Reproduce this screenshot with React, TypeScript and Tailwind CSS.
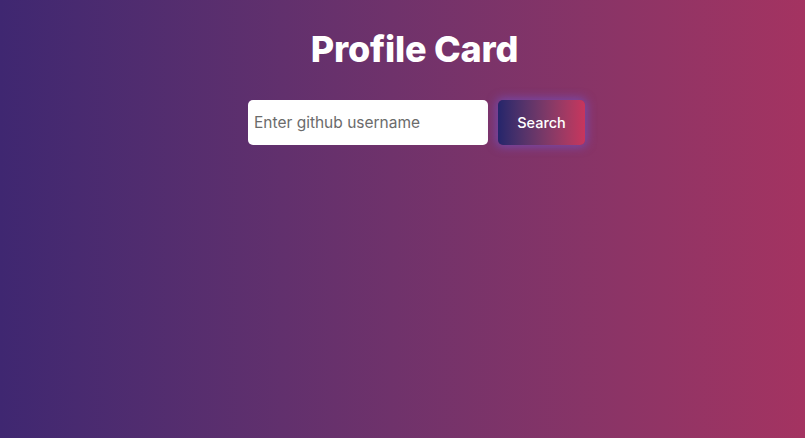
import React from "react";

export default function App() {
  return (
    <div className="min-h-screen w-full bg-gradient-to-r from-[#3f2771] to-[#a43361] font-['Inter',sans-serif]">
      <div className="flex flex-col items-center pt-[27px] pl-[28px]">
        <h1 className="text-[36px] leading-[44px] font-extrabold text-white tracking-[-0.2px] pr-[4px]">Profile Card</h1>
        <div className="mt-[29px] flex gap-[10px]">
          <input
            type="text"
            placeholder="Enter github username"
            className="w-[240px] h-[45px] rounded-[5px] bg-white px-[6px] text-[15.5px] text-gray-700 placeholder:text-[#6b6b6b] outline-none font-['Inter',sans-serif]"
          />
          <button className="w-[87px] h-[45px] rounded-[5px] bg-gradient-to-r from-[#25256b] to-[#c8355d] text-white text-[14.5px] font-medium shadow-[0_0_10px_2px_rgba(110,90,220,0.55)]">
            Search
          </button>
        </div>
      </div>
    </div>
  );
}
